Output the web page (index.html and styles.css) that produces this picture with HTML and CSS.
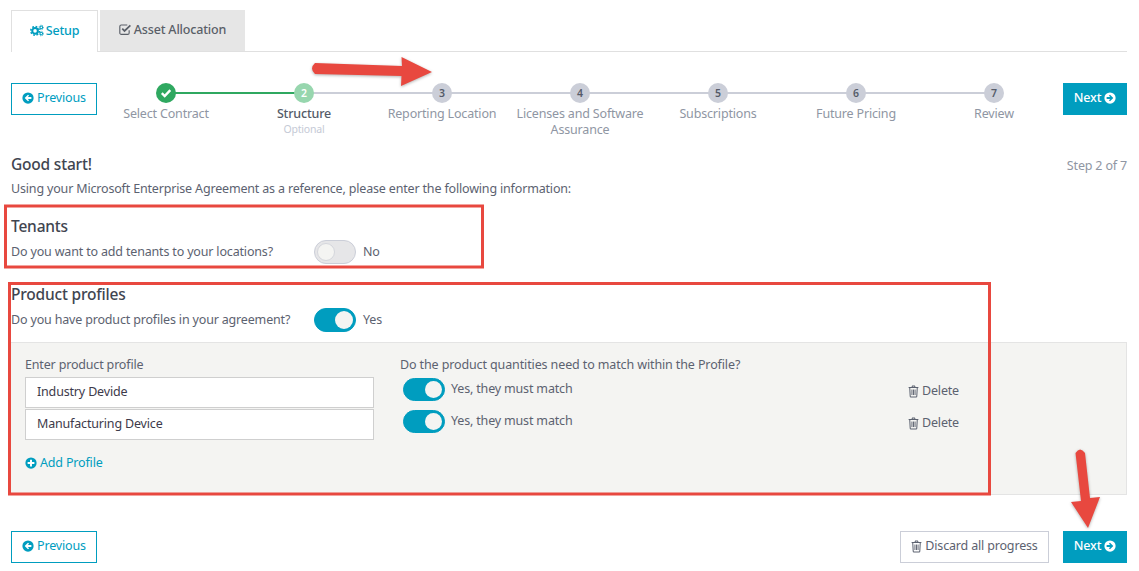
FILE: index.html
```html
<!DOCTYPE html>
<html lang="en">
<head>
<meta charset="utf-8">
<title>Setup</title>
<link rel="stylesheet" href="styles.css">
</head>
<body>
<svg width="0" height="0" class="defs">
  <symbol id="i-left" viewBox="0 0 16 16"><circle cx="8" cy="8" r="7.500" fill="currentColor"/><path d="M8 3.600 3.600 8 8 12.400l1.500-1.500-1.900-1.700h4.900V6.800H7.600l1.900-1.700z" fill="#fff"/></symbol>
  <symbol id="i-right" viewBox="0 0 16 16"><circle cx="8" cy="8" r="7.500" fill="currentColor"/><path d="M8 3.600 12.400 8 8 12.400l-1.500-1.500 1.900-1.700H3.500V6.800h4.900L6.500 5.100z" fill="#009dbf"/></symbol>
  <symbol id="i-plus" viewBox="0 0 16 16"><circle cx="8" cy="8" r="7.500" fill="currentColor"/><path d="M6.700 3.500h2.600v3.200h3.200v2.600H9.300v3.200H6.700V9.300H3.500V6.700h3.200z" fill="#fff"/></symbol>
  <symbol id="i-trash" viewBox="0 0 14 16"><path d="M5 2.500 5.700 1h2.600L9 2.500M.8 3h12.400M2.200 3l.6 11c0 .6.500 1 1 1h6.400c.5 0 1-.4 1-1l.6-11" fill="none" stroke="currentColor" stroke-width="1.300"/><path d="M5 5.500v7M7 5.500v7M9 5.500v7" stroke="currentColor" stroke-width="1.200"/></symbol>
  <symbol id="i-cogs" viewBox="0 0 18 16"><circle cx="6.500" cy="8.500" r="3.600" fill="none" stroke="currentColor" stroke-width="2.600"/><circle cx="6.500" cy="8.500" r="5.500" fill="none" stroke="currentColor" stroke-width="2" stroke-dasharray="2.200 2.120"/><circle cx="14.500" cy="4" r="1.700" fill="none" stroke="currentColor" stroke-width="1.300"/><circle cx="14.500" cy="4" r="2.900" fill="none" stroke="currentColor" stroke-width="1" stroke-dasharray="1.100 1.170"/><circle cx="14.500" cy="12" r="1.700" fill="none" stroke="currentColor" stroke-width="1.300"/><circle cx="14.500" cy="12" r="2.900" fill="none" stroke="currentColor" stroke-width="1" stroke-dasharray="1.100 1.170"/></symbol>
  <symbol id="i-checkbox" viewBox="0 0 16 16"><path d="M12.500 9v3.200c0 1-.8 1.800-1.800 1.800H2.800c-1 0-1.800-.8-1.800-1.800V4.300c0-1 .8-1.800 1.800-1.800h7.400" fill="none" stroke="currentColor" stroke-width="1.400"/><path d="m4 7 2.800 2.800L14 2.800" fill="none" stroke="currentColor" stroke-width="2.100"/></symbol>
  <symbol id="i-check" viewBox="0 0 12 12"><path d="M1.800 6.200 4.700 9l5.600-5.800" fill="none" stroke="#fff" stroke-width="2.400"/></symbol>
</svg>

<div class="page">
  <nav class="tabs">
    <a class="tab tab-active"><svg class="icon icon-cogs"><use href="#i-cogs"/></svg>Setup</a>
    <a class="tab tab-idle"><svg class="icon icon-box"><use href="#i-checkbox"/></svg>Asset Allocation</a>
  </nav>

  <section class="stepper">
    <button class="btn btn-outline"><svg class="icon"><use href="#i-left"/></svg>Previous</button>
    <ol class="steps">
      <li class="step step-done"><span class="dot"><svg class="check"><use href="#i-check"/></svg></span><span class="step-label">Select Contract</span></li>
      <li class="step step-current"><span class="dot">2</span><span class="step-label">Structure</span><span class="step-note">Optional</span></li>
      <li class="step"><span class="dot">3</span><span class="step-label">Reporting Location</span></li>
      <li class="step"><span class="dot">4</span><span class="step-label">Licenses and Software Assurance</span></li>
      <li class="step"><span class="dot">5</span><span class="step-label">Subscriptions</span></li>
      <li class="step"><span class="dot">6</span><span class="step-label">Future Pricing</span></li>
      <li class="step"><span class="dot">7</span><span class="step-label">Review</span></li>
    </ol>
    <button class="btn btn-solid">Next<svg class="icon icon-after"><use href="#i-right"/></svg></button>
  </section>

  <header class="intro">
    <div class="intro-top"><h2 class="good">Good start!</h2><span class="step-count">Step 2 of 7</span></div>
    <p class="text">Using your Microsoft Enterprise Agreement as a reference, please enter the following information:</p>
  </header>

  <section class="block">
    <h3 class="heading">Tenants</h3>
    <div class="question">
      <span class="text q-label">Do you want to add tenants to your locations?</span>
      <span class="toggle"><span class="knob"></span></span>
      <span class="text">No</span>
    </div>
  </section>

  <section class="block block-profiles">
    <h3 class="heading">Product profiles</h3>
    <div class="question">
      <span class="text q-label">Do you have product profiles in your agreement?</span>
      <span class="toggle toggle-on"><span class="knob"></span></span>
      <span class="text">Yes</span>
    </div>
  </section>

  <section class="panel">
    <div class="col-left">
      <label class="text field-label">Enter product profile</label>
      <input class="field" type="text" value="Industry Devide">
      <input class="field" type="text" value="Manufacturing Device">
      <a class="add"><svg class="icon"><use href="#i-plus"/></svg>Add Profile</a>
    </div>
    <div class="col-right">
      <div class="text field-label match-label">Do the product quantities need to match within the Profile?</div>
      <div class="match-row">
        <span class="toggle toggle-on toggle-sm"><span class="knob"></span></span>
        <span class="text match-text">Yes, they must match</span>
        <a class="text delete"><svg class="icon icon-trash"><use href="#i-trash"/></svg>Delete</a>
      </div>
      <div class="match-row">
        <span class="toggle toggle-on toggle-sm"><span class="knob"></span></span>
        <span class="text match-text">Yes, they must match</span>
        <a class="text delete"><svg class="icon icon-trash"><use href="#i-trash"/></svg>Delete</a>
      </div>
    </div>
  </section>

  <footer class="footer">
    <button class="btn btn-outline"><svg class="icon"><use href="#i-left"/></svg>Previous</button>
    <span class="footer-space"></span>
    <button class="btn btn-discard"><svg class="icon icon-trash"><use href="#i-trash"/></svg>Discard all progress</button>
    <button class="btn btn-solid">Next<svg class="icon icon-after"><use href="#i-right"/></svg></button>
  </footer>
</div>

<svg class="marks" width="1139" height="571" viewBox="0 0 1139 571">
  <rect class="mark-box" x="5.500" y="206" width="477" height="61"/>
  <rect class="mark-box" x="9.500" y="283.500" width="980" height="210.500"/>
  <path class="mark-arrow" d="M315 63 402 66 401.500 57 432 72 401 86 401.500 76 315 74Q309 68.500 315 63Z"/>
  <path class="mark-arrow" d="M1075.500 453Q1080 446 1085 453L1090 498 1100 497 1088 528 1071 502 1081 501Z"/>
</svg>
</body>
</html>
```
FILE: styles.css
```css
* { box-sizing: border-box; }
html, body { margin: 0; padding: 0; height: 100%; overflow: hidden; background: #fff; }
body { font-family: "Noto Sans", "Open Sans", sans-serif; font-size: 12.5px; letter-spacing: -0.17px; color: #5c6270; position: relative; }
.defs { position: absolute; }
.page { padding: 10px 12px 0 11px; }
.icon { width: 12px; height: 12px; margin-right: 3px; vertical-align: -2px; color: inherit; }
.icon-after { margin: 0 0 0 3px; }

.tabs { display: flex; height: 42px; border-bottom: 1px solid #e0e0e0; gap: 2px; }
.tab { display: flex; align-items: center; justify-content: center; height: 41px; padding-bottom: 2px; font-weight: 500; font-size: 12.5px; }
.tab-active { width: 87px; height: 42px; background: #fff; color: #009dbf; border: 1px solid #e0e0e0; border-bottom: 0; padding-bottom: 3px; }
.tab-idle { width: 145px; background: #e6e6e6; color: #5a5f68; }
.icon-cogs { width: 14px; height: 13px; margin-right: 2px; }
.icon-box { width: 13px; height: 13px; margin-right: 2px; }

.btn { display: block; height: 32px; font: inherit; letter-spacing: inherit; cursor: pointer; padding: 0 0 3px; white-space: nowrap; }
.btn-outline { width: 86px; background: #fff; color: #009dbf; border: 1px solid #009dbf; }
.btn-solid { width: 64px; background: #009dbf; color: #fff; border: 0; font-weight: 500; }
.btn-discard { width: 149px; background: #fff; color: #5c6270; border: 1px solid #cbced8; margin-right: 14px; }

.stepper { display: flex; align-items: flex-start; margin-top: 31px; height: 71px; }
.steps { flex: 1; display: flex; list-style: none; margin: 0; padding: 0; }
.step { position: relative; flex: 1 1 0; display: flex; flex-direction: column; align-items: center; text-align: center; color: #8f96a3; }
.step::before { content: ""; position: absolute; top: 9px; left: 50%; width: 100%; height: 2px; background: #cbced8; }
.step:last-child::before { display: none; }
.step-done::before { background: #2fa860; }
.dot { position: relative; display: flex; align-items: center; justify-content: center; width: 20px; height: 20px; border-radius: 50%; background: #cbced8; color: #555b68; font-size: 10.5px; font-weight: 600; }
.step-done .dot { background: #2fa860; }
.step-current .dot { background: #97d6ae; color: #fff; }
.check { width: 12px; height: 12px; }
.step-label { width: 136px; margin-top: 3px; line-height: 16px; font-size: 12.5px; }
.step-current .step-label { color: #555b68; font-weight: 500; }
.step-note { font-size: 10.5px; line-height: 14px; color: #c5cad6; }

.intro-top { display: flex; justify-content: space-between; align-items: center; height: 20px; }
.good { margin: 0; font-size: 15.5px; letter-spacing: -0.2px; line-height: 20px; font-weight: 500; color: #3f4550; }
.step-count { color: #8f96a3; font-size: 12.5px; position: relative; top: 1px; }
.text { margin: 0; line-height: 20px; color: #5c6270; }
.intro .text { margin-top: 5px; }

.block { margin-top: 17px; }
.block-profiles { margin-top: 20px; }
.heading { margin: 0; font-size: 15.5px; letter-spacing: -0.2px; line-height: 20px; font-weight: 500; color: #3f4550; }
.question { display: flex; align-items: center; margin-top: 4px; height: 24px; }
.q-label { width: 303px; }
.question .toggle { margin-right: 7px; }

.toggle { position: relative; display: block; flex: none; width: 42px; height: 24px; border-radius: 12px; background: #e6e6e8; border: 1px solid #cbced8; }
.knob { position: absolute; top: 2px; left: 2px; width: 18px; height: 18px; border-radius: 50%; background: #f4f4f2; border: 1px solid #d4d6dc; }
.toggle-on { background: #009dbf; border-color: #009dbf; }
.toggle-on .knob { left: auto; right: 2px; border: 0; }
.toggle-sm { height: 23px; }
.toggle-sm .knob { top: 2px; width: 17px; height: 17px; }

.panel { display: flex; gap: 26px; height: 153px; margin-top: 10px; padding: 12px 0 0 14px; background: #f4f4f2; border: 1px solid #e4e4e4; border-left: 0; }
.col-left { width: 349px; flex: none; display: flex; flex-direction: column; }
.col-right { width: 558px; flex: none; }
.field-label { display: block; margin-bottom: 2px; }
.field { display: block; width: 349px; height: 31px; margin-bottom: 1px; padding: 0 11px 2px; background: #fff; border: 1px solid #cfcfcf; font: inherit; letter-spacing: inherit; color: #3d3a4a; }
.add { margin-top: 12px; line-height: 20px; color: #009dbf; }
.match-label { margin-bottom: 3px; letter-spacing: -0.12px; }
.match-row { display: flex; align-items: center; height: 23px; margin: 0 0 9px 3px; }
.match-text { margin: -2px 0 0 6px; flex: 1; }
.delete { width: 50px; margin-top: 3px; white-space: nowrap; }
.icon-trash { width: 11px; height: 13px; margin-right: 3px; vertical-align: -3px; }

.footer { display: flex; margin-top: 36px; }
.footer-space { flex: 1; }

.marks { position: absolute; left: 0; top: 0; pointer-events: none; }
.mark-box { fill: none; stroke: #e8483f; stroke-width: 3; }
.mark-arrow { fill: #e8483f; filter: drop-shadow(0 1px 1.5px rgba(0,0,0,.3)); }
```
